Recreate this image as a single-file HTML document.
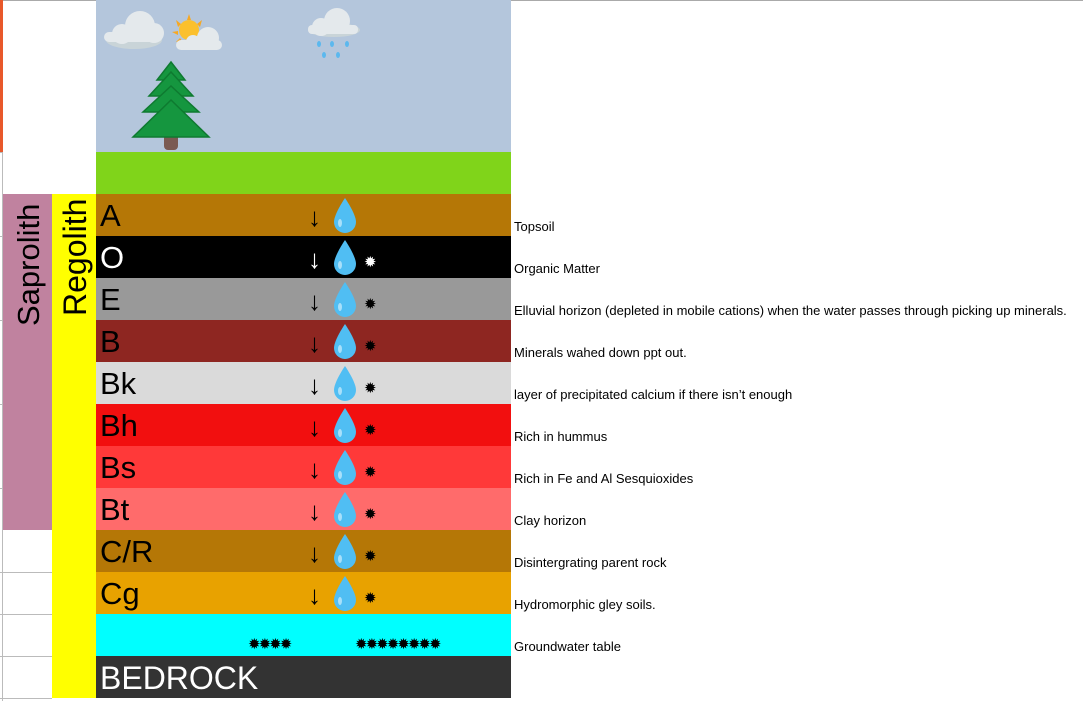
<!DOCTYPE html>
<html><head><meta charset="utf-8"><style>
*{margin:0;padding:0;box-sizing:border-box}
body{width:1083px;height:701px;background:#fff;position:relative;overflow:hidden;font-family:"Liberation Sans",sans-serif}
.a{position:absolute}
.row{position:absolute;left:96px;width:415px;height:42px}
.lbl{position:absolute;left:4px;top:4px;font-size:31px;line-height:36px}
.arr{position:absolute;left:212px;top:9px;font-size:26px;line-height:28px}
.drop{position:absolute;left:236px;top:2px}
.sp{position:absolute;left:268px;top:19px;font-size:15px;line-height:15px}
.desc{position:absolute;left:514px;font-size:13px;line-height:15px;color:#000}
.gl{position:absolute;left:0;width:52px;height:1px;background:#bbb}
</style></head><body>
<div class="a" style="left:0;top:0;width:1083px;height:1px;background:#aaa"></div>
<div class="a" style="left:0;top:0;width:3px;height:152px;background:#e8582a"></div>
<div class="a" style="left:2px;top:152px;width:1px;height:549px;background:#bbb"></div>
<div class="gl" style="top:152px;width:3px"></div>
<div class="gl" style="top:236px;width:3px"></div>
<div class="gl" style="top:320px;width:3px"></div>
<div class="gl" style="top:404px;width:3px"></div>
<div class="gl" style="top:488px;width:3px"></div>
<div class="gl" style="top:572px"></div>
<div class="gl" style="top:614px"></div>
<div class="gl" style="top:656px"></div>
<div class="gl" style="top:698px"></div>
<div class="a" style="left:96px;top:0;width:415px;height:152px;background:#b4c6dc"></div>
<div class="a" style="left:96px;top:152px;width:415px;height:42px;background:#80d41a"></div>
<svg class="a" style="left:96px;top:0" width="415" height="152">
<g fill="#e4e9ec"><ellipse cx="38" cy="40" rx="28" ry="9" fill="#c9d4d8"/><circle cx="44" cy="26" r="15"/><circle cx="26" cy="34" r="10"/><circle cx="58" cy="33" r="10"/><rect x="8" y="32" width="58" height="10" rx="5"/></g>
<g fill="#f7a823"><circle cx="93" cy="30" r="10" fill="#fbc02d"/><path d="M93 14l2 6h-4zM80 20l5 4-3 3zM106 20l-5 4 3 3zM76 32l6-1v4zM80 42l4-4 2 3z"/></g>
<g fill="#e4e9ec"><circle cx="112" cy="38" r="11"/><rect x="80" y="40" width="46" height="10" rx="5"/><circle cx="97" cy="42" r="7"/></g>
<g fill="#e4e9ec"><ellipse cx="238" cy="30" rx="26" ry="7" fill="#c9d4d8"/><circle cx="241" cy="21" r="13"/><circle cx="225" cy="27" r="9"/><rect x="212" y="25" width="50" height="9" rx="4"/></g>
<g fill="#5bb8ee"><ellipse cx="223" cy="44" rx="2" ry="3"/><ellipse cx="236" cy="44" rx="2" ry="3"/><ellipse cx="251" cy="44" rx="2" ry="3"/><ellipse cx="228" cy="55" rx="2" ry="3"/><ellipse cx="242" cy="55" rx="2" ry="3"/></g>
<rect x="68" y="132" width="14" height="18" rx="4" fill="#7b5a52"/>
<g fill="#15963f" stroke="#0e7a30" stroke-width="1.5"><path d="M75 62l14 18h-28z"/><path d="M75 72l22 24h-44z"/><path d="M75 86l28 26h-56z"/><path d="M75 100l38 37h-76z"/></g>
</svg>
<div class="a" style="left:3px;top:194px;width:49px;height:336px;background:#c0829f"></div>
<div class="a" style="left:52px;top:194px;width:44px;height:504px;background:#ffff00"></div>
<div class="a" style="left:9px;top:326px;transform:rotate(-90deg);transform-origin:0 0;font-size:31px;line-height:40px;white-space:nowrap">Saprolith</div>
<div class="a" style="left:55px;top:316px;transform:rotate(-90deg);transform-origin:0 0;font-size:32px;line-height:40px;white-space:nowrap">Regolith</div>

<div class="row" style="top:194px;background:#b57706"><span class="lbl">A</span><span class="arr">↓</span><svg class="drop" width="26" height="38"><path d="M13 2C13 2 2 18 2 26a11 11 0 0 0 22 0C24 18 13 2 13 2z" fill="#50bef3"/><ellipse cx="8" cy="27" rx="2" ry="4" fill="#a8e0fa"/></svg></div>
<div class="row" style="top:236px;background:#000;color:#fff"><span class="lbl">O</span><span class="arr">↓</span><svg class="drop" width="26" height="38"><path d="M13 2C13 2 2 18 2 26a11 11 0 0 0 22 0C24 18 13 2 13 2z" fill="#50bef3"/><ellipse cx="8" cy="27" rx="2" ry="4" fill="#a8e0fa"/></svg><span class="sp">✹</span></div>
<div class="row" style="top:278px;background:#999"><span class="lbl">E</span><span class="arr">↓</span><svg class="drop" width="26" height="38"><path d="M13 2C13 2 2 18 2 26a11 11 0 0 0 22 0C24 18 13 2 13 2z" fill="#50bef3"/><ellipse cx="8" cy="27" rx="2" ry="4" fill="#a8e0fa"/></svg><span class="sp">✹</span></div>
<div class="row" style="top:320px;background:#8e2621"><span class="lbl">B</span><span class="arr">↓</span><svg class="drop" width="26" height="38"><path d="M13 2C13 2 2 18 2 26a11 11 0 0 0 22 0C24 18 13 2 13 2z" fill="#50bef3"/><ellipse cx="8" cy="27" rx="2" ry="4" fill="#a8e0fa"/></svg><span class="sp">✹</span></div>
<div class="row" style="top:362px;background:#dadada"><span class="lbl">Bk</span><span class="arr">↓</span><svg class="drop" width="26" height="38"><path d="M13 2C13 2 2 18 2 26a11 11 0 0 0 22 0C24 18 13 2 13 2z" fill="#50bef3"/><ellipse cx="8" cy="27" rx="2" ry="4" fill="#a8e0fa"/></svg><span class="sp">✹</span></div>
<div class="row" style="top:404px;background:#f20f0f"><span class="lbl">Bh</span><span class="arr">↓</span><svg class="drop" width="26" height="38"><path d="M13 2C13 2 2 18 2 26a11 11 0 0 0 22 0C24 18 13 2 13 2z" fill="#50bef3"/><ellipse cx="8" cy="27" rx="2" ry="4" fill="#a8e0fa"/></svg><span class="sp">✹</span></div>
<div class="row" style="top:446px;background:#ff3939"><span class="lbl">Bs</span><span class="arr">↓</span><svg class="drop" width="26" height="38"><path d="M13 2C13 2 2 18 2 26a11 11 0 0 0 22 0C24 18 13 2 13 2z" fill="#50bef3"/><ellipse cx="8" cy="27" rx="2" ry="4" fill="#a8e0fa"/></svg><span class="sp">✹</span></div>
<div class="row" style="top:488px;background:#ff6b6b"><span class="lbl">Bt</span><span class="arr">↓</span><svg class="drop" width="26" height="38"><path d="M13 2C13 2 2 18 2 26a11 11 0 0 0 22 0C24 18 13 2 13 2z" fill="#50bef3"/><ellipse cx="8" cy="27" rx="2" ry="4" fill="#a8e0fa"/></svg><span class="sp">✹</span></div>
<div class="row" style="top:530px;background:#b57706"><span class="lbl">C/R</span><span class="arr">↓</span><svg class="drop" width="26" height="38"><path d="M13 2C13 2 2 18 2 26a11 11 0 0 0 22 0C24 18 13 2 13 2z" fill="#50bef3"/><ellipse cx="8" cy="27" rx="2" ry="4" fill="#a8e0fa"/></svg><span class="sp">✹</span></div>
<div class="row" style="top:572px;background:#e8a200"><span class="lbl">Cg</span><span class="arr">↓</span><svg class="drop" width="26" height="38"><path d="M13 2C13 2 2 18 2 26a11 11 0 0 0 22 0C24 18 13 2 13 2z" fill="#50bef3"/><ellipse cx="8" cy="27" rx="2" ry="4" fill="#a8e0fa"/></svg><span class="sp">✹</span></div>
<div class="row" style="top:614px;background:#00ffff"><span style="position:absolute;left:152px;top:23px;font-size:15px;line-height:15px;letter-spacing:-2px">✹✹✹✹</span><span style="position:absolute;left:259px;top:23px;font-size:15px;line-height:15px;letter-spacing:-2px">✹✹✹✹✹✹✹✹</span></div>
<div class="row" style="top:656px;background:#333;color:#fff"><span class="lbl" style="top:4px;font-size:32px">BEDROCK</span></div>

<div class="desc" style="top:219px">Topsoil</div>
<div class="desc" style="top:261px">Organic Matter</div>
<div class="desc" style="top:303px">Elluvial horizon (depleted in mobile cations) when the water passes through picking up minerals.</div>
<div class="desc" style="top:345px">Minerals wahed down ppt out.</div>
<div class="desc" style="top:387px">layer of precipitated calcium if there isn’t enough</div>
<div class="desc" style="top:429px">Rich in hummus</div>
<div class="desc" style="top:471px">Rich in Fe and Al Sesquioxides</div>
<div class="desc" style="top:513px">Clay horizon</div>
<div class="desc" style="top:555px">Disintergrating parent rock</div>
<div class="desc" style="top:597px">Hydromorphic gley soils.</div>
<div class="desc" style="top:639px">Groundwater table</div>
</body></html>
